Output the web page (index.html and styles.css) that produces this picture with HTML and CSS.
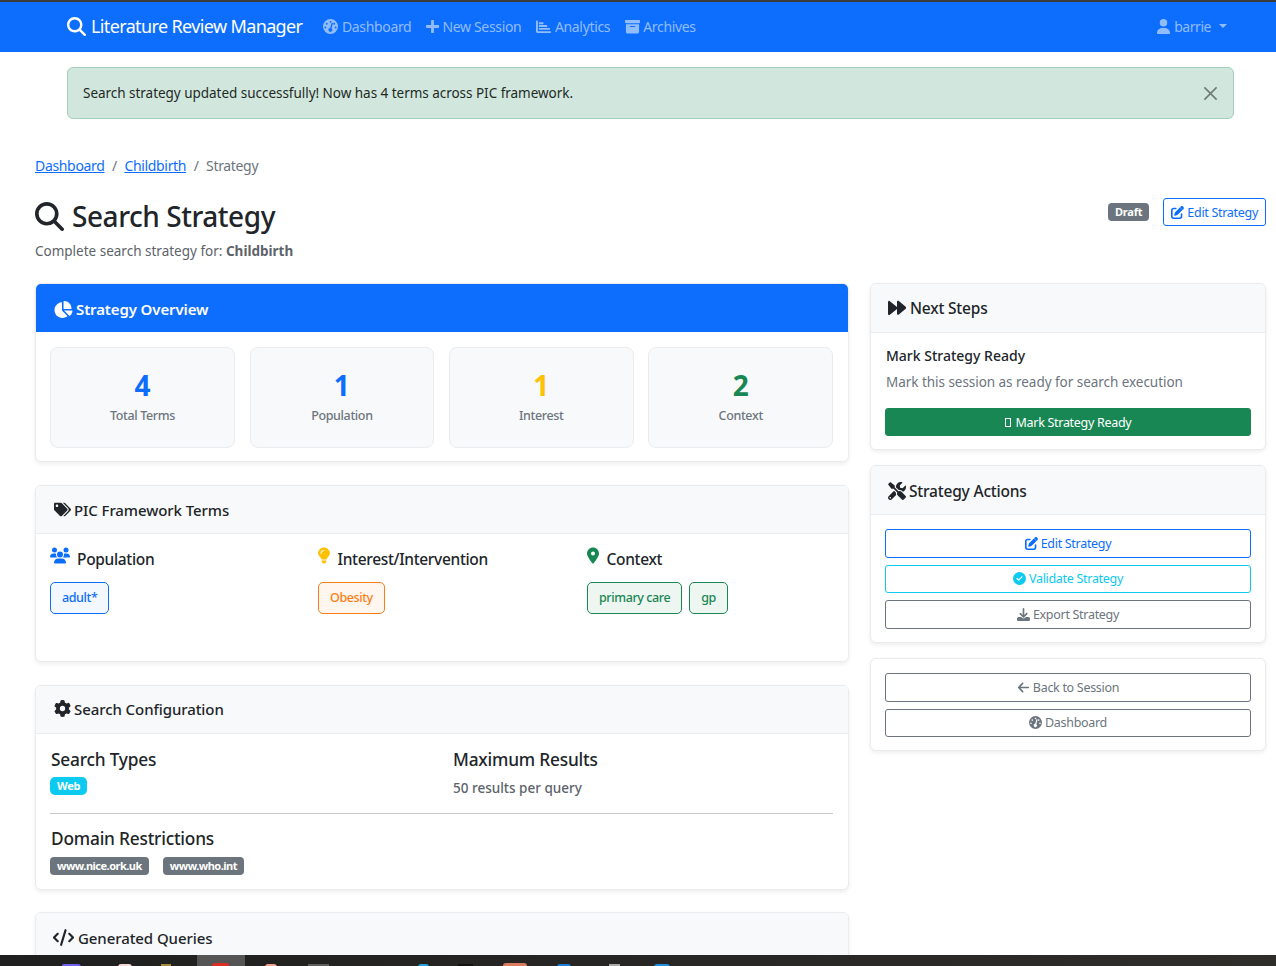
FILE: index.html
```html
<!DOCTYPE html>
<html lang="en">
<head>
    <meta charset="UTF-8">
    <title>Search Strategy - Literature Review Manager</title>
    <link rel="stylesheet" href="styles.css">
</head>
<body>
<svg class="sprite" xmlns="http://www.w3.org/2000/svg">
    <symbol id="i-search" viewBox="0 0 512 512"><path d="M416 208c0 45.9-14.9 88.3-40 122.7L502.6 457.4c12.5 12.5 12.5 32.8 0 45.3s-32.8 12.5-45.3 0L330.7 376c-34.4 25.2-76.8 40-122.7 40C93.1 416 0 322.9 0 208S93.1 0 208 0S416 93.1 416 208zM208 352a144 144 0 1 0 0-288 144 144 0 1 0 0 288z"/></symbol>
    <symbol id="i-gauge" viewBox="0 0 512 512"><path fill-rule="evenodd" d="M256 0a256 256 0 1 0 0 512 256 256 0 0 0 0-512zM256 64a32 32 0 1 1 0 64 32 32 0 0 1 0-64zM128 128a32 32 0 1 1 0 64 32 32 0 0 1 0-64zM80 256a32 32 0 1 1 0 64 32 32 0 0 1 0-64zM432 256a32 32 0 1 1 0 64 32 32 0 0 1 0-64zM384 128a32 32 0 1 1 0 64 32 32 0 0 1 0-64zM336 156l-46 164a64 64 0 1 1-46-12l46-166c4-12 16-20 30-16 12 4 20 18 16 30z"/></symbol>
    <symbol id="i-plus" viewBox="0 0 448 512"><path d="M416 208H272V64c0-18-14-32-32-32h-32c-18 0-32 14-32 32v144H32c-18 0-32 14-32 32v32c0 18 14 32 32 32h144v144c0 18 14 32 32 32h32c18 0 32-14 32-32V304h144c18 0 32-14 32-32v-32c0-18-14-32-32-32z"/></symbol>
    <symbol id="i-chart" viewBox="0 0 512 512"><path d="M32 48c-18 0-32 14-32 32v336c0 35 29 64 64 64h416c18 0 32-14 32-32s-14-32-32-32H64V80c0-18-14-32-32-32zM112 112h128c9 0 16 7 16 16v32c0 9-7 16-16 16H112c-9 0-16-7-16-16v-32c0-9 7-16 16-16zM112 208h256c9 0 16 7 16 16v32c0 9-7 16-16 16H112c-9 0-16-7-16-16v-32c0-9 7-16 16-16zM112 304h352c9 0 16 7 16 16v32c0 9-7 16-16 16H112c-9 0-16-7-16-16v-32c0-9 7-16 16-16z"/></symbol>
    <symbol id="i-archive" viewBox="0 0 512 512"><path fill-rule="evenodd" d="M32 32h448c18 0 32 14 32 32v48c0 18-14 32-32 32H32c-18 0-32-14-32-32V64c0-18 14-32 32-32zM32 176h448v256c0 35-29 64-64 64H96c-35 0-64-29-64-64V176zM176 240c-9 0-16 7-16 16s7 16 16 16h160c9 0 16-7 16-16s-7-16-16-16H176z"/></symbol>
    <symbol id="i-user" viewBox="0 0 448 512"><path d="M224 256a128 128 0 1 0 0-256 128 128 0 0 0 0 256zM178 304C80 304 0 384 0 482c0 16 13 30 30 30h388c17 0 30-14 30-30 0-98-80-178-178-178h-92z"/></symbol>
    <symbol id="i-edit" viewBox="0 0 512 512"><path d="M472 22c-24-24-62-24-86 0l-30 30 104 104 30-30c24-24 24-62 0-86l-18-18zM172 236c-6 6-11 14-14 23l-32 94c-3 9-1 19 6 26s17 9 26 6l94-32c8-3 16-8 23-14l178-178-104-104-177 179zM96 64C43 64 0 107 0 160v256c0 53 43 96 96 96h256c53 0 96-43 96-96v-96c0-18-14-32-32-32s-32 14-32 32v96c0 18-14 32-32 32H96c-18 0-32-14-32-32V160c0-18 14-32 32-32h96c18 0 32-14 32-32s-14-32-32-32H96z"/></symbol>
    <symbol id="i-pie" viewBox="0 0 576 512"><path d="M304 240V16c0-9 7-16 16-16 124 0 224 100 224 224 0 9-7 16-16 16H304zM32 272C32 151 122 51 239 35c9-1 17 6 17 15v238l157 157c7 7 6 18-2 23-40 28-88 44-141 44-132 0-238-107-238-240zM558 288c9 0 17 8 15 17-8 56-35 105-74 142-6 6-16 5-22-1L320 288h238z"/></symbol>
    <symbol id="i-forward" viewBox="0 0 512 512"><path d="M52 61C39 50 20 48 11 64 4 70 0 80 0 96v320c0 16 4 26 11 32 9 16 28 14 41 3l204-170v137c0 16 16 32 32 32 8 0 15-3 20-8l204-170c12-10 12-36 0-46L308 56c-5-5-12-8-20-8-16 0-32 16-32 32v151L52 61z"/></symbol>
    <symbol id="i-tools" viewBox="0 0 512 512"><path d="M501.1 395.7L384 278.6c-23.1-23.1-57.6-27.6-85.4-13.9L192 158.1V96L64 0 0 64l96 128h62.1l106.6 106.6c-13.6 27.8-9.2 62.3 13.9 85.4l117.1 117.1c14.6 14.6 38.2 14.6 52.7 0l52.7-52.7c14.5-14.6 14.5-38.2 0-52.7zM331.7 225c28.3 0 54.9 11 74.9 31l19.4 19.4c15.8-6.9 30.8-16.5 43.8-29.5 37.1-37.1 49.7-89.3 37.9-136.7-2.2-9-13.5-12.1-20.1-5.5l-74.4 74.4-67.9-11.3L334 98.9l74.4-74.4c6.6-6.6 3.4-17.9-5.7-20.2-47.4-11.7-99.6.9-136.6 37.9-28.5 28.5-41.9 66.1-41.2 103.6l82.1 82.1c8.1-1.9 16.5-2.9 24.7-2.9zm-103.9 82l-56.7-56.7L18.7 402.8c-25 25-25 65.5 0 90.5s65.5 25 90.5 0l123.6-123.6c-7.6-19.9-9.9-41.6-5-62.7zM64 472c-13.2 0-24-10.8-24-24 0-13.3 10.7-24 24-24s24 10.7 24 24c0 13.2-10.7 24-24 24z"/></symbol>
    <symbol id="i-tags" viewBox="0 0 640 512"><path d="M497.941 225.941L286.059 14.059A48 48 0 0 0 252.118 0H48C21.49 0 0 21.49 0 48v204.118a48 48 0 0 0 14.059 33.941l211.882 211.882c18.744 18.745 49.136 18.746 67.882 0l204.118-204.118c18.745-18.745 18.745-49.137 0-67.882zM112 160c-26.51 0-48-21.49-48-48s21.49-48 48-48 48 21.49 48 48-21.49 48-48 48zm513.941 133.823L421.823 497.941c-18.745 18.745-49.137 18.745-67.882 0l-.36-.36L527.64 323.522c16.999-16.999 26.36-39.6 26.36-63.64s-9.362-46.641-26.36-63.64L331.397 0h48.721a48 48 0 0 1 33.941 14.059l211.882 211.882c18.745 18.745 18.745 49.137 0 67.882z"/></symbol>
    <symbol id="i-users" viewBox="0 0 640 512"><path d="M144 0a80 80 0 1 1 0 160 80 80 0 0 1 0-160zM512 0a80 80 0 1 1 0 160 80 80 0 0 1 0-160zM0 299c0-59 48-107 107-107h43c16 0 31 3 45 10-1 7-3 15-3 22 0 38 17 72 43 96H21c-12 0-21-9-21-21zM405 320c27-24 43-58 43-96 0-8-1-15-2-22 14-7 29-10 45-10h43c59 0 106 48 106 107 0 12-9 21-21 21H405zM224 224a96 96 0 1 1 192 0 96 96 0 0 1-192 0zM128 485c0-74 60-133 133-133h118c73 0 133 59 133 133 0 15-12 27-27 27H155c-15 0-27-12-27-27z"/></symbol>
    <symbol id="i-bulb" viewBox="0 0 384 512"><path d="M272 384c10-32 30-59 50-86 5-7 11-14 16-21 20-28 46-66 46-85C384 86 298 0 192 0S0 86 0 192c0 19 26 57 46 85 5 7 11 14 16 21 20 27 40 54 50 86h160zM192 512c44 0 80-36 80-80v-16H112v16c0 44 36 80 80 80zM112 192c0 9-7 16-16 16s-16-7-16-16c0-62 50-112 112-112 9 0 16 7 16 16s-7 16-16 16c-44 0-80 36-80 80z"/></symbol>
    <symbol id="i-pin" viewBox="0 0 384 512"><path fill-rule="evenodd" d="M215 501c51-64 169-220 169-309C384 86 298 0 192 0S0 86 0 192c0 89 117 245 169 309 12 15 34 15 46 0zM192 128a64 64 0 1 1 0 128 64 64 0 0 1 0-128z"/></symbol>
    <symbol id="i-gear" viewBox="0 0 512 512"><path fill-rule="evenodd" d="M496 167c3 9 1 18-6 25l-43 39c1 8 2 16 2 25s-1 17-2 25l43 39c7 6 9 16 6 25-4 12-10 23-16 34l-5 8c-7 11-14 21-22 31-6 7-15 9-24 6l-56-18c-13 10-28 19-43 25l-12 57c-2 9-9 16-18 18-14 2-28 3-43 3s-29-1-43-3c-9-2-16-9-18-18l-12-57c-15-6-30-15-43-25l-56 18c-9 3-18 1-24-6-8-10-15-20-22-31l-5-8c-6-11-12-22-16-34-3-9-1-18 6-25l43-39c-1-8-2-16-2-25s1-17 2-25l-43-39c-7-7-9-16-6-25 4-12 10-23 16-34l5-8c7-11 14-21 22-31 6-7 15-9 24-6l56 18c13-10 28-19 43-25l12-57c2-9 9-16 18-18 14-3 28-4 43-4s29 1 43 3c9 2 16 9 18 18l12 57c15 6 30 15 43 25l56-18c9-3 18-1 24 6 8 10 15 20 22 31l5 8c6 11 12 22 16 35zM256 336a80 80 0 1 0 0-160 80 80 0 0 0 0 160z"/></symbol>
    <symbol id="i-code" viewBox="0 0 640 512"><path d="M392 1c-17-5-35 5-40 22L216 471c-5 17 5 35 22 40s35-5 40-22L414 41c5-17-5-35-22-40zM473 119c-13 13-13 33 0 46l91 91-91 91c-13 13-13 33 0 46s33 13 46 0l114-114c13-13 13-33 0-46L519 119c-13-13-33-13-46 0zM167 119c-13-13-33-13-46 0L7 233c-13 13-13 33 0 46l114 114c13 13 33 13 46 0s13-33 0-46l-91-91 91-91c13-13 13-33 0-46z"/></symbol>
    <symbol id="i-check" viewBox="0 0 512 512"><path fill-rule="evenodd" d="M256 0a256 256 0 1 0 0 512 256 256 0 0 0 0-512zM369 209L241 337c-9 9-25 9-34 0l-64-64c-9-9-9-25 0-34s25-9 34 0l47 47 111-111c9-9 25-9 34 0s9 25 0 34z"/></symbol>
    <symbol id="i-download" viewBox="0 0 512 512"><path d="M288 32c0-18-14-32-32-32s-32 14-32 32v243l-73-74c-13-12-33-12-46 0s-12 33 0 46l128 128c13 12 33 12 46 0l128-128c12-13 12-33 0-46s-33-12-46 0l-73 74V32zM64 352c-35 0-64 29-64 64v32c0 35 29 64 64 64h384c35 0 64-29 64-64v-32c0-35-29-64-64-64H347l-45 45c-25 25-66 25-91 0l-45-45H64z"/></symbol>
    <symbol id="i-back" viewBox="0 0 448 512"><path d="M9 233c-12 13-12 33 0 46l160 160c13 12 33 12 46 0s12-33 0-46L109 288h307c18 0 32-14 32-32s-14-32-32-32H109l106-105c12-13 12-33 0-46s-33-12-46 0L9 233z"/></symbol>
</svg>

<div class="topstrip"></div>
<nav class="navbar">
    <a class="brand" href="#"><svg class="ic"><use href="#i-search"/></svg>Literature Review Manager</a>
    <a class="nav-link" href="#"><svg class="ic"><use href="#i-gauge"/></svg>Dashboard</a>
    <a class="nav-link nav-new" href="#"><svg class="ic"><use href="#i-plus"/></svg>New Session</a>
    <a class="nav-link" href="#"><svg class="ic"><use href="#i-chart"/></svg>Analytics</a>
    <a class="nav-link" href="#"><svg class="ic"><use href="#i-archive"/></svg>Archives</a>
    <a class="nav-link nav-user" href="#"><svg class="ic"><use href="#i-user"/></svg>barrie<span class="caret"></span></a>
</nav>

<div class="viewport">
    <div class="alert">
        <span>Search strategy updated successfully! Now has 4 terms across PIC framework.</span>
        <svg class="alert-close" viewBox="0 0 16 16"><path d="M1.5 1.5l13 13M14.5 1.5l-13 13"/></svg>
    </div>

    <main class="page">
        <div class="crumbs">
            <a href="#">Dashboard</a><span class="sep">/</span><a href="#">Childbirth</a><span class="sep">/</span><span class="crumb-now">Strategy</span>
        </div>

        <div class="page-head">
            <div>
                <h1><svg class="ic"><use href="#i-search"/></svg>Search Strategy</h1>
                <p class="sub">Complete search strategy for: <strong>Childbirth</strong></p>
            </div>
            <div class="head-actions">
                <span class="badge badge-grey">Draft</span>
                <a class="btn btn-blue btn-head" href="#"><svg class="ic"><use href="#i-edit"/></svg>Edit Strategy</a>
            </div>
        </div>

        <div class="columns">
            <div class="col-main">
                <section class="card card-overview">
                    <header class="card-head head-blue"><svg class="ic"><use href="#i-pie"/></svg>Strategy Overview</header>
                    <div class="stats">
                        <div class="stat"><b class="num-blue">4</b><span>Total Terms</span></div>
                        <div class="stat"><b class="num-blue">1</b><span>Population</span></div>
                        <div class="stat"><b class="num-yellow">1</b><span>Interest</span></div>
                        <div class="stat"><b class="num-green">2</b><span>Context</span></div>
                    </div>
                </section>

                <section class="card card-pic">
                    <header class="card-head"><svg class="ic"><use href="#i-tags"/></svg>PIC Framework Terms</header>
                    <div class="pic-grid">
                        <div>
                            <h3><svg class="ic num-blue"><use href="#i-users"/></svg>Population</h3>
                            <div class="terms"><span class="term term-blue">adult*</span></div>
                        </div>
                        <div>
                            <h3><svg class="ic ic-narrow num-yellow"><use href="#i-bulb"/></svg>Interest/Intervention</h3>
                            <div class="terms"><span class="term term-orange">Obesity</span></div>
                        </div>
                        <div>
                            <h3><svg class="ic ic-narrow num-green"><use href="#i-pin"/></svg>Context</h3>
                            <div class="terms"><span class="term term-green">primary care</span><span class="term term-green">gp</span></div>
                        </div>
                    </div>
                </section>

                <section class="card card-config">
                    <header class="card-head head-config"><svg class="ic"><use href="#i-gear"/></svg>Search Configuration</header>
                    <div class="config">
                        <div class="config-row">
                            <div>
                                <h3>Search Types</h3>
                                <span class="badge badge-cyan">Web</span>
                            </div>
                            <div>
                                <h3>Maximum Results</h3>
                                <p class="muted-strong">50 results per query</p>
                            </div>
                        </div>
                        <hr>
                        <h3>Domain Restrictions</h3>
                        <div class="domains">
                            <span class="badge badge-grey">www.nice.ork.uk</span>
                            <span class="badge badge-grey">www.who.int</span>
                        </div>
                    </div>
                </section>

                <section class="card card-queries">
                    <header class="card-head head-queries"><svg class="ic"><use href="#i-code"/></svg>Generated Queries</header>
                </section>
            </div>

            <aside class="col-side">
                <section class="card">
                    <header class="card-head head-side"><svg class="ic"><use href="#i-forward"/></svg>Next Steps</header>
                    <div class="side-body side-next">
                        <h4>Mark Strategy Ready</h4>
                        <p class="side-note">Mark this session as ready for search execution</p>
                        <a class="btn btn-green" href="#"><i class="tofu"></i>Mark Strategy Ready</a>
                    </div>
                </section>

                <section class="card">
                    <header class="card-head head-side head-actions-card"><svg class="ic"><use href="#i-tools"/></svg>Strategy Actions</header>
                    <div class="side-body btn-stack">
                        <a class="btn btn-blue" href="#"><svg class="ic"><use href="#i-edit"/></svg>Edit Strategy</a>
                        <a class="btn btn-cyan" href="#"><svg class="ic"><use href="#i-check"/></svg>Validate Strategy</a>
                        <a class="btn btn-grey" href="#"><svg class="ic"><use href="#i-download"/></svg>Export Strategy</a>
                    </div>
                </section>

                <section class="card card-links">
                    <div class="side-body btn-stack">
                        <a class="btn btn-grey" href="#"><svg class="ic"><use href="#i-back"/></svg>Back to Session</a>
                        <a class="btn btn-grey" href="#"><svg class="ic"><use href="#i-gauge"/></svg>Dashboard</a>
                    </div>
                </section>
            </aside>
        </div>
    </main>
</div>

<footer class="taskbar">
    <i class="task t-purple"></i>
    <i class="task t-pink"></i>
    <i class="task t-gold"></i>
    <span class="task-active"><i class="task t-red"></i></span>
    <i class="task t-salmon"></i>
    <i class="task t-grey"></i>
    <i class="task t-sky"></i>
    <i class="task t-dark"></i>
    <i class="task t-clay"></i>
    <i class="task t-blue"></i>
    <i class="task t-silver"></i>
    <i class="task t-blue2"></i>
</footer>
</body>
</html>
```

FILE: styles.css
```css
* {
    box-sizing: border-box;
}
html, body {
    height: 100%;
}
body {
    margin: 0;
    height: 966px;
    overflow: hidden;
    display: flex;
    flex-direction: column;
    background: #fff;
    color: #212529;
    font-family: "Noto Sans", "Open Sans", sans-serif;
    font-size: 14px;
}
a {
    text-decoration: none;
}
h1, h3, h4, p {
    margin: 0;
    font-weight: 500;
}
.sprite {
    display: none;
}
.ic {
    width: 1em;
    height: 1em;
    fill: currentColor;
    flex: none;
}

/* top of the window */
.topstrip {
    height: 2px;
    flex: none;
    background: #3a3a3a;
}
.navbar {
    height: 50px;
    flex: none;
    display: flex;
    align-items: center;
    padding: 0 49px 2px 67px;
    background: #0d6efd;
}
.brand {
    display: flex;
    align-items: center;
    color: #fff;
    font-size: 18px;
    letter-spacing: -0.63px;
    margin-right: 21px;
}
.brand .ic {
    width: 19px;
    height: 19px;
    margin-right: 5px;
}
.nav-link {
    display: flex;
    align-items: center;
    color: rgba(255, 255, 255, .55);
    font-size: 14px;
    letter-spacing: -0.33px;
    margin-right: 14.5px;
}
.nav-link .ic {
    width: 15px;
    height: 15px;
    margin-right: 3.5px;
}
.nav-new {
    margin-right: 15px;
}
.nav-new .ic {
    margin: 0 2.5px 0 -1px;
}
.nav-user {
    margin: 0 0 0 auto;
    letter-spacing: -0.45px;
}
.caret {
    width: 0;
    height: 0;
    margin-left: 8px;
    border-top: 4px solid currentColor;
    border-left: 4px solid transparent;
    border-right: 4px solid transparent;
}

.viewport {
    flex: 1;
    min-height: 0;
    overflow: hidden;
}
.alert {
    height: 52px;
    margin: 15px 42px 0 67px;
    padding: 0 15px;
    display: flex;
    align-items: center;
    justify-content: space-between;
    background: #d1e7dd;
    border: 1px solid #a3cfbb;
    border-radius: 6px;
    color: #1f2a25;
    font-size: 13.5px;
    letter-spacing: -0.03px;
}
.alert-close {
    width: 15px;
    height: 15px;
    stroke: #6f7a75;
    stroke-width: 1.7;
    fill: none;
}

.page {
    padding: 36px 10px 0 35px;
}
.crumbs {
    display: flex;
    align-items: center;
    height: 21px;
    font-size: 14px;
    letter-spacing: -0.33px;
}
.crumbs a {
    color: #0d6efd;
    text-decoration: underline;
}
.sep {
    margin: 0 7.5px;
    color: #6c757d;
}
.crumb-now {
    color: #6c757d;
}
.page-head {
    display: flex;
    justify-content: space-between;
    align-items: flex-start;
    height: 107px;
    padding-top: 18px;
}
h1 {
    display: flex;
    align-items: center;
    height: 44px;
    font-size: 28px;
    letter-spacing: -0.45px;
}
h1 .ic {
    width: 29px;
    height: 29px;
    margin-right: 8px;
}
.sub {
    font-weight: 400;
    color: #5c636a;
    font-size: 13.5px;
    line-height: 20px;
    margin-top: 3px;
}
.sub strong {
    font-weight: 700;
}
.head-actions {
    display: flex;
    align-items: center;
    gap: 14px;
    margin-top: 4px;
}
.badge {
    display: inline-block;
    height: 18px;
    line-height: 18px;
    padding: 0 7px;
    border-radius: 4px;
    color: #fff;
    font-size: 11px;
    font-weight: 700;
    letter-spacing: -0.2px;
}
.badge-grey {
    background: #6c757d;
}
.badge-cyan {
    background: #0dcaf0;
    border-radius: 5px;
}
.btn {
    display: flex;
    align-items: center;
    justify-content: center;
    height: 28px;
    border: 1px solid;
    border-radius: 3px;
    font-size: 12.5px;
    letter-spacing: -0.3px;
}
.btn .ic {
    width: 13px;
    height: 13px;
    margin-right: 3px;
}
.btn-head {
    padding: 0 7px;
}
.btn-blue {
    color: #0d6efd;
}
.btn-cyan {
    color: #0dcaf0;
}
.btn-grey {
    color: #6c757d;
}
.btn-green {
    color: #fff;
    background: #198754;
    border-color: #198754;
}
.tofu {
    display: inline-block;
    width: 6px;
    height: 9px;
    margin-right: 5px;
    border: 1px solid #fff;
}

.columns {
    display: flex;
    align-items: flex-start;
    gap: 21px;
}
.col-main {
    width: 814px;
    flex: none;
    display: flex;
    flex-direction: column;
    gap: 23px;
}
.col-side {
    flex: 1;
    display: flex;
    flex-direction: column;
    gap: 15px;
}
.card {
    background: #fff;
    border: 1px solid #e9ecef;
    border-radius: 6px;
    box-shadow: 0 2px 4px rgba(0, 0, 0, .07);
    overflow: hidden;
}
.card-head {
    display: flex;
    align-items: center;
    height: 48px;
    padding: 0 18px;
    background: #f8f9fa;
    border-bottom: 1px solid #e9ecef;
    font-size: 15px;
    font-weight: 500;
    letter-spacing: -0.08px;
}
.card-head .ic {
    width: 17px;
    height: 17px;
    margin-right: 3px;
}
.head-blue {
    padding-top: 2px;
    background: #0d6efd;
    border-bottom: 0;
    color: #fff;
    font-weight: 600;
    letter-spacing: -0.12px;
}
.head-blue .ic {
    width: 20px;
    margin-left: -1px;
    margin-right: 3px;
}
.head-config {
    padding-bottom: 2px;
}
.head-side {
    height: 49px;
    padding: 0 17px;
    font-size: 15.5px;
    letter-spacing: -0.2px;
}
.head-side .ic {
    width: 18px;
    height: 18px;
    margin-right: 4px;
}
.head-actions-card {
    padding-top: 2px;
}
.head-actions-card .ic {
    margin-right: 3px;
}
.head-queries {
    height: 60px;
    align-items: flex-start;
    padding-top: 15px;
    border-bottom: 0;
}
.head-queries .ic {
    width: 21px;
    margin: 1px 4px 0 -1px;
}

.card-overview {
    height: 179px;
}
.stats {
    display: grid;
    grid-template-columns: repeat(4, 1fr);
    gap: 14.8px;
    padding: 15px 15px 0 14.2px;
}
.stat {
    height: 101px;
    display: flex;
    flex-direction: column;
    align-items: center;
    padding-top: 18px;
    background: #f8f9fa;
    border: 1px solid #e9ecef;
    border-radius: 8px;
    color: #6c757d;
    font-size: 12.5px;
    font-weight: 500;
    letter-spacing: -0.35px;
}
.stat b {
    font-size: 28px;
    line-height: 38px;
    font-weight: 700;
    letter-spacing: 0;
}
.stat span {
    margin-top: 3px;
}
.num-blue {
    color: #0d6efd;
}
.num-yellow {
    color: #ffc107;
}
.num-green {
    color: #198754;
}

h3 {
    display: flex;
    align-items: center;
    font-size: 17.3px;
    line-height: 22px;
    letter-spacing: -0.2px;
}
.card-pic {
    height: 177px;
}
.pic-grid {
    display: grid;
    grid-template-columns: 268px 269px 1fr;
    padding: 14px 14px 0;
}
.pic-grid h3 {
    font-size: 15.5px;
    letter-spacing: -0.33px;
}
.pic-grid h3 .ic {
    width: 20px;
    height: 17px;
    margin: -7px 7px 0 0;
}
.pic-grid h3 .ic-narrow {
    width: 12px;
    margin-right: 7.5px;
}
.terms {
    display: flex;
    gap: 7px;
    margin-top: 12px;
}
.term {
    display: flex;
    align-items: center;
    height: 32px;
    padding: 0 11px 1px;
    border: 1px solid;
    border-radius: 5px;
    font-size: 12.5px;
    font-weight: 500;
    letter-spacing: -0.4px;
}
.term-blue {
    color: #0d6efd;
    border-color: #0d6efd;
    background: #f3f8ff;
}
.term-orange {
    color: #fd7e14;
    border-color: #fd7e14;
    background: #fff6ef;
}
.term-green {
    color: #198754;
    border-color: #198754;
    background: #eef6f2;
}

.card-config {
    height: 205px;
}
.card-queries {
    margin-top: -1px;
}
.config {
    padding: 15px 15px 0 14px;
}
.config h3 {
    padding-left: 1px;
}
.config-row {
    display: grid;
    grid-template-columns: 402px 1fr;
}
.config-row .badge {
    margin-top: 6px;
}
.muted-strong {
    margin-top: 8px;
    padding-left: 1px;
    color: #5c636a;
    font-size: 13.5px;
}
.config hr {
    margin: 16px 0 14px;
    border: 0;
    border-top: 1px solid #c9cccf;
}
.domains {
    display: flex;
    gap: 14px;
    margin-top: 7px;
}
.domains .badge {
    letter-spacing: -0.5px;
}

.side-body {
    padding: 14px 14px 13px;
}
.side-next {
    padding-top: 13px;
}
.side-body h4 {
    padding-left: 1px;
    font-size: 14px;
    line-height: 20px;
}
.side-note {
    margin: 6px 0 16px;
    padding-left: 1px;
    font-weight: 400;
    color: #6c757d;
    font-size: 13.5px;
    letter-spacing: -0.04px;
    line-height: 20px;
}
.btn-stack {
    display: flex;
    flex-direction: column;
    gap: 7px;
}
.col-side .btn-stack .btn {
    height: 28.5px;
}
.card-links {
    margin-top: 0.5px;
}

/* desktop taskbar, only the tops of the icons are on the picture */
.taskbar {
    height: 11px;
    flex: none;
    display: flex;
    padding-left: 62px;
    background: linear-gradient(90deg, #1f1f1f, #2f2d2a);
    overflow: hidden;
}
.task {
    display: block;
    height: 3px;
    margin-top: 9px;
    flex: none;
}
.task-active {
    width: 48px;
    flex: none;
    margin-left: 26px;
    padding-left: 15px;
    background: #555;
}
.t-purple { width: 19px; background: #6f63e8; border-radius: 6px 10px 0 0; }
.t-pink { width: 14px; margin-left: 37px; background: #f2d7d3; border-radius: 7px 7px 0 0; }
.t-gold { width: 10px; margin-left: 29px; background: #a58a3a; }
.t-red { width: 17px; background: #dc2d22; border-radius: 8px 8px 0 0; margin-top: 8px; }
.t-salmon { width: 12px; margin-left: 20px; background: #f0a090; border-radius: 6px 6px 0 0; }
.t-grey { width: 21px; margin-left: 31px; background: #5f5f5f; }
.t-sky { width: 11px; margin-left: 89px; background: #2a9fd8; border-radius: 5px 5px 0 0; }
.t-dark { width: 15px; margin-left: 29px; background: #111; }
.t-clay { width: 24px; margin-left: 30px; background: #d97b5f; border-radius: 6px 6px 0 0; margin-top: 8px; }
.t-blue { width: 14px; margin-left: 30px; background: #1a7fd8; border-radius: 7px 7px 0 0; }
.t-silver { width: 11px; margin-left: 38px; background: #a9a9a9; }
.t-blue2 { width: 16px; margin-left: 34px; background: #1f8fe0; border-radius: 8px 8px 0 0; }
```
